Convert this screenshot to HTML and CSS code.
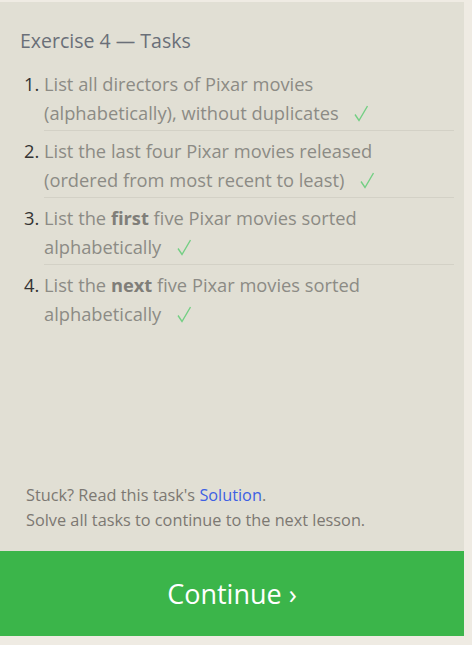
FILE: index.html
```html
<!DOCTYPE html>
<html>
<head>
<meta charset="utf-8">
<link rel="stylesheet" href="styles.css">
</head>
<body>
<div class="panel">
  <div class="content">
    <h2 class="title">Exercise 4 — Tasks</h2>
    <ol class="tasks">
      <li>List all directors of Pixar movies (alphabetically), without duplicates <svg class="check" width="14" height="17" viewBox="0 0 14 17"><path d="M1 9.5 L5 15.5 L13.5 1" fill="none" stroke="#74cf84" stroke-width="1.4"/></svg></li>
      <li>List the last four Pixar movies released (ordered from most recent to least) <svg class="check" width="14" height="17" viewBox="0 0 14 17"><path d="M1 9.5 L5 15.5 L13.5 1" fill="none" stroke="#74cf84" stroke-width="1.4"/></svg></li>
      <li>List the <b>first</b> five Pixar movies sorted alphabetically <svg class="check" width="14" height="17" viewBox="0 0 14 17"><path d="M1 9.5 L5 15.5 L13.5 1" fill="none" stroke="#74cf84" stroke-width="1.4"/></svg></li>
      <li>List the <b>next</b> five Pixar movies sorted alphabetically <svg class="check" width="14" height="17" viewBox="0 0 14 17"><path d="M1 9.5 L5 15.5 L13.5 1" fill="none" stroke="#74cf84" stroke-width="1.4"/></svg></li>
    </ol>
    <div class="help">
      <p>Stuck? Read this task's <a href="#">Solution</a>.</p>
      <p>Solve all tasks to continue to the next lesson.</p>
    </div>
  </div>
  <button class="continue">Continue ›</button>
</div>
</body>
</html>
```
FILE: styles.css
```css
html, body {
  margin: 0;
  padding: 0;
  background: #efebe3;
}
body {
  padding-top: 2px;
  font-family: "Open Sans", "Noto Sans", sans-serif;
}
.panel {
  width: 464px;
  height: 634px;
  background: #e1dfd4;
  display: flex;
  flex-direction: column;
}
.content {
  flex: 1;
  display: flex;
  flex-direction: column;
  padding: 26px 10px 0 20px;
}
.title {
  margin: 0;
  font-size: 19.5px;
  font-weight: 400;
  color: #6a6f78;
  line-height: 26px;
}
.tasks {
  margin: 15px 0 0 0;
  padding: 0 0 0 24px;
  font-size: 18.3px;
  line-height: 29px;
  color: #8c8b85;
}
.tasks li {
  margin-bottom: 3px;
  padding-right: 18px;
}
.tasks li::marker {
  color: #333;
}
.tasks li + li {
  border-top: 1px solid #d3d1c6;
  padding-top: 5px;
}
.tasks b {
  color: #7f7e79;
}
.check {
  margin-left: 11px;
  vertical-align: -2px;
}
.help {
  margin-top: auto;
  padding: 0 0 18px 6px;
  font-size: 16.3px;
  line-height: 25px;
  color: #7c7872;
}
.help p {
  margin: 0;
}
.help a {
  color: #3e5fe3;
  text-decoration: none;
}
.continue {
  height: 85px;
  border: none;
  background: #3bb54a;
  color: #fff;
  font-family: "Open Sans", "Noto Sans", sans-serif;
  font-size: 27px;
  padding: 0;
  width: 100%;
}
```
